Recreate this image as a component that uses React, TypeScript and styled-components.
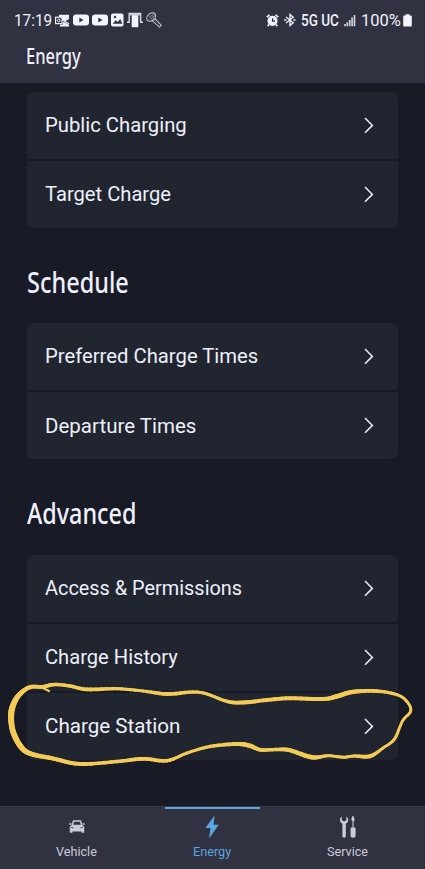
import React, { useLayoutEffect, useRef, useState } from "react";
import styled, { createGlobalStyle } from "styled-components";

const GlobalStyle = createGlobalStyle`
  * { box-sizing: border-box; }
  body { margin: 0; background: #181a25; }
`;

const Screen = styled.div`
  position: relative;
  display: flex;
  flex-direction: column;
  width: 425px;
  height: 869px;
  overflow: hidden;
  background: #181a25;
  color: #eef0fc;
  font-family: Roboto, "Noto Sans", sans-serif;
`;

const Header = styled.header`
  flex: none;
  height: 83px;
  background: #303241;
`;

const StatusBar = styled.div`
  display: flex;
  justify-content: space-between;
  align-items: center;
  height: 41px;
  padding: 0 13px 0 14px;
`;

const StatusGroup = styled.div<{ $gap: number }>`
  display: flex;
  align-items: center;
  gap: ${(p) => p.$gap}px;
`;

const Text = styled.span<{ $size: number; $weight?: number }>`
  display: block;
  white-space: nowrap;
  font-size: ${(p) => p.$size}px;
  font-weight: ${(p) => p.$weight ?? 400};
  line-height: 1.2;
`;

const FitBox = styled.span<{ $width: number }>`
  display: block;
  width: ${(p) => p.$width}px;
`;

const Stretch = styled.span`
  display: inline-block;
  transform-origin: left center;
`;

type FitProps = { children: string; width: number; size: number; weight?: number };

/** Condenses or expands a label so that it fills the given width. */
function FitText({ children, width, size, weight }: FitProps) {
  const ref = useRef<HTMLSpanElement>(null);
  const [scale, setScale] = useState(1);
  useLayoutEffect(() => {
    if (ref.current) setScale(width / ref.current.offsetWidth);
  }, [width, children]);
  return (
    <FitBox $width={width}>
      <Text $size={size} $weight={weight}>
        <Stretch ref={ref} style={{ transform: `scaleX(${scale})` }}>
          {children}
        </Stretch>
      </Text>
    </FitBox>
  );
}

const PageTitle = styled.h1`
  margin: 0;
  padding: 3px 0 0 26px;
  font-weight: 400;
  font-family: "Noto Sans", sans-serif;
`;

const Content = styled.main`
  flex: 1;
  min-height: 0;
  padding: 8.6px 27px 0;
  overflow: hidden;
`;

const SectionTitle = styled.h2`
  display: flex;
  align-items: center;
  height: 95.1px;
  margin: 0;
  padding-top: 13px;
  font-weight: 400;
  font-family: "Noto Sans", sans-serif;
`;

const Card = styled.section`
  display: flex;
  flex-direction: column;
  gap: 2px;
  overflow: hidden;
  border-radius: 7px;
`;

const Row = styled.div`
  display: flex;
  align-items: center;
  justify-content: space-between;
  height: 67.2px;
  padding: 1px 24.5px 0 17.6px;
  background: #21252f;
`;

const NavBar = styled.nav`
  flex: none;
  display: grid;
  grid-template-columns: 165px 95px 1fr;
  height: 63px;
  background: #303241;
  border-top: 1px solid #393b49;
`;

const NavItem = styled.div<{ $active?: boolean; $left?: number; $right?: number }>`
  display: flex;
  flex-direction: column;
  align-items: center;
  padding: 5px ${(p) => p.$right ?? 0}px 0 ${(p) => p.$left ?? 0}px;
  color: ${(p) => (p.$active ? "#5ca5df" : "#cbccd9")};
  box-shadow: inset 0 2px 0 ${(p) => (p.$active ? "#5ca5df" : "transparent")};
`;

const NavIcon = styled.span`
  display: flex;
  align-items: center;
  justify-content: center;
  height: 29px;
  margin-bottom: 4px;
`;

const Annotation = styled.svg`
  position: absolute;
  inset: 0;
  pointer-events: none;
`;

const Chevron = () => (
  <svg width="11" height="18" viewBox="0 0 11 18" fill="none">
    <path d="M2 1 9.4 8.4 2 15.8" stroke="#eceefa" strokeWidth="1.5" />
  </svg>
);

const Outlook = () => (
  <svg width="15" height="13" viewBox="0 0 15 13">
    <path d="M4 .7h10v3.1L10.2 6.5H7V3H4zM8 8.3h1.6L14 10.8V12.5H5v-2h3z" fill="#eef0fc" />
    <rect x=".6" y="3.2" width="6.4" height="6.4" fill="#303241" stroke="#eef0fc" strokeWidth="1.2" />
    <ellipse cx="3.8" cy="6.4" rx="1.2" ry="1.5" fill="none" stroke="#eef0fc" />
    <path d="m8.4 7.6 5.6-3.2M8.4 6.5l5.6 3.3" stroke="#eef0fc" strokeWidth="1.2" />
  </svg>
);

const Video = () => (
  <svg width="16" height="12" viewBox="0 0 16 12">
    <rect y=".5" width="16" height="11" rx="3" fill="#f2f4ff" />
    <path d="M6.3 3.6 10.5 6l-4.2 2.4z" fill="#303241" />
  </svg>
);

const Picture = () => (
  <svg width="13" height="14" viewBox="0 0 13 14">
    <rect y=".5" width="12.5" height="13" rx="2" fill="#f2f4ff" />
    <path d="m1.7 10.8 3-3.5 2.1 1.8 2.4-3 2.2 4.7z" fill="#303241" />
    <circle cx="4" cy="4" r="1.2" fill="#303241" />
  </svg>
);

const Printer = () => (
  <svg width="16" height="16" viewBox="0 0 16 16">
    <path d="M2.2 9.8V1.5h11.4v8.3M0 10.2h3M13 10.2h3" fill="none" stroke="#dadce9" strokeWidth="1.4" />
    <path d="M2.5 1.5h11v2h-11z" fill="#c9cbd9" />
    <path d="M4.7 3.2h6.6v12H4.7z" fill="#f2f4ff" />
  </svg>
);

const Racket = () => (
  <svg width="16" height="16" viewBox="0 0 16 16" fill="none" stroke="#c3c4d1" strokeWidth="1.1">
    <ellipse cx="5.2" cy="5" rx="3.5" ry="5" transform="rotate(48 5.2 5)" />
    <path d="M3 5.6 8 1.6M4.4 7.4 9.4 3" opacity=".6" />
    <path d="M6.3 8.8 8.8 6.6l6.4 6.6-1.7 1.9z" />
  </svg>
);

const Alarm = () => (
  <svg width="13" height="13" viewBox="0 0 13 13">
    <circle cx="6.5" cy="6.8" r="5.1" fill="#eef0fc" />
    <path d="M.8 3.2 3.5.9M9.5.9l2.7 2.3M3 10.5l-1.3 1.6M10 10.5l1.3 1.6" stroke="#eef0fc" strokeWidth="1.7" />
    <path d="M6.6 4.2v2.9H9" fill="none" stroke="#303241" strokeWidth="1.2" />
  </svg>
);

const Bluetooth = () => (
  <svg width="12" height="14" viewBox="0 0 12 14" fill="none" stroke="#eef0fc" strokeWidth="1.4">
    <path d="m2 4 7.2 5.8L6 12.5v-11l3.2 2.7L2 10" />
    <path d="M.2 7h2.2M9.4 7h2.2" strokeWidth="1.7" />
  </svg>
);

const Signal = () => (
  <svg width="12" height="13" viewBox="0 0 12 13" fill="#d6d8e5">
    <path d="M.2 10h1.6v2.3H.2zM2.5 8.2h1.6v4.1H2.5zM4.9 5.9h1.6v6.4H4.9zM7.3 3.5h1.6v8.8H7.3zM9.7 1h1.6v11.3H9.7z" />
  </svg>
);

const Battery = () => (
  <svg width="9" height="13" viewBox="0 0 9 13">
    <path d="M2.6.2h3.8v1.4h1.2c.8 0 1.2.4 1.2 1.2v8.5c0 .8-.4 1.3-1.2 1.3H1.4c-.8 0-1.2-.5-1.2-1.3V2.8c0-.8.4-1.2 1.2-1.2h1.2z" fill="#f2f4ff" />
  </svg>
);

const Car = () => (
  <svg width="16" height="13" viewBox="0 0 16 13">
    <path d="M3.2 5 4.6 1h6.8l1.4 4" fill="none" stroke="currentColor" strokeWidth="1.5" />
    <path d="M.3 3.3h2.4l-.6 1.4H.3zM15.7 3.3h-2.4l.6 1.4h1.8zM3 4.7h10l2.2 2v6.1h-2.6v-1.2H3.4v1.2H.8V6.7z" fill="currentColor" />
    <path d="M2 7.3 4.6 8M14 7.3 11.4 8" stroke="#303241" strokeWidth=".8" />
  </svg>
);

const Bolt = () => (
  <svg width="14" height="24" viewBox="0 0 14 24">
    <path d="M9.6.5.3 13h5.2L4 23.5 13.8 9.7H8.5z" fill="currentColor" />
  </svg>
);

const Tools = () => (
  <svg width="16" height="22" viewBox="0 0 16 22" fill="currentColor">
    <path d="M1.8.5C.6 1.3 0 2.6 0 4c0 1.7.9 3 2.4 3.7v12.7c0 1.5 3.4 1.5 3.4 0V7.7C7.3 7 8.2 5.7 8.2 4c0-1.4-.6-2.7-1.8-3.5v3.7L4.1 5.5 1.8 4.2z" />
    <path d="M12.1.3h1.4l1.2 3.5-1.1 1.6v6h.7c.8 0 1.3.5 1.3 1.3v7.5c0 1.9-5 1.9-5 0v-7.5c0-.8.5-1.3 1.2-1.3h.7v-6l-1.2-1.6z" />
  </svg>
);

type Point = [number, number, number];

/** Pen positions as x, y and stroke width. */
const loop: Point[] = [
  [11.2, 714, 6], [14, 703, 5.6], [20, 694, 4.8], [30, 687.2, 4], [43, 686.8, 3.6],
  [55, 684.5, 3.5], [70, 686, 3.4], [87, 689.4, 3.8], [117, 688.7, 3.2], [143, 691, 3.2],
  [167, 694, 3.8], [193, 692, 3.2], [207, 694, 3], [227, 701.4, 3.5], [243, 702.5, 4],
  [267, 700, 3.8], [290, 698.2, 4], [323, 699, 4], [337, 696.3, 4.6], [353, 691.8, 4.2],
  [377, 691.1, 3.5], [397, 694.7, 3], [406.5, 701, 2.8], [410.8, 710.8, 2.8],
  [402.5, 721, 2.8], [394.5, 739, 3], [383, 748, 2.8], [370, 756.2, 4], [354, 756, 3],
  [343, 757.2, 3], [328, 755.7, 3], [312, 757.3, 4.5], [290, 750.3, 4], [278, 749.4, 3.5],
  [261, 749.9, 3.7], [250, 745.8, 4.5], [237, 744, 4], [210, 746.5, 3.3], [187, 753, 3],
  [167, 760.7, 3.6], [143, 758.8, 3.8], [117, 761.5, 3.5], [80, 764, 4], [53, 758.5, 4.2],
  [30, 753.5, 5], [20, 745.5, 5.6], [12.6, 730, 5.6],
];

/** Smooths the closed pen line and samples short pieces along it. */
function samplePen(points: Point[], steps: number): Point[] {
  const n = points.length;
  return points.flatMap((p1, i) => {
    const p0 = points[(i - 1 + n) % n];
    const p2 = points[(i + 1) % n];
    const p3 = points[(i + 2) % n];
    return Array.from({ length: steps }, (_, s) => {
      const t = s / steps;
      return [0, 1, 2].map(
        (k) =>
          0.5 *
          (2 * p1[k] +
            (p2[k] - p0[k]) * t +
            (2 * p0[k] - 5 * p1[k] + 4 * p2[k] - p3[k]) * t * t +
            (3 * p1[k] - p0[k] - 3 * p2[k] + p3[k]) * t * t * t),
      ) as Point;
    });
  });
}

const pen = samplePen(loop, 6);

function HandDrawnLoop() {
  return (
    <Annotation width="425" height="869" viewBox="0 0 425 869" stroke="#f3cb57" strokeLinecap="round">
      {pen.map((p, i) => {
        const q = pen[(i + 1) % pen.length];
        return <line key={i} x1={p[0]} y1={p[1]} x2={q[0]} y2={q[1]} strokeWidth={p[2]} />;
      })}
      <path d="M41 687 49 691M43 686 51 684" strokeWidth="2.3" />
    </Annotation>
  );
}

type Item = [label: string, width: number];

const List = ({ items }: { items: Item[] }) => (
  <Card>
    {items.map(([label, width]) => (
      <Row key={label}>
        <FitText width={width} size={19.7}>{label}</FitText>
        <Chevron />
      </Row>
    ))}
  </Card>
);

export default function App() {
  return (
    <>
      <GlobalStyle />
      <Screen>
        <Header>
          <StatusBar>
            <StatusGroup $gap={3}>
              <FitText width={38} size={16.5}>17:19</FitText>
              <Outlook />
              <Video />
              <Video />
              <Picture />
              <Printer />
              <Racket />
            </StatusGroup>
            <StatusGroup $gap={5}>
              <Alarm />
              <Bluetooth />
              <FitText width={38} size={16} weight={500}>5G UC</FitText>
              <Signal />
              <StatusGroup $gap={2}>
                <FitText width={40} size={16.5}>100%</FitText>
                <Battery />
              </StatusGroup>
            </StatusGroup>
          </StatusBar>
          <PageTitle>
            <FitText width={55} size={21} weight={500}>Energy</FitText>
          </PageTitle>
        </Header>
        <Content>
          <List items={[["Public Charging", 142], ["Target Charge", 126]]} />
          <SectionTitle><FitText width={102} size={29} weight={500}>Schedule</FitText></SectionTitle>
          <List items={[["Preferred Charge Times", 213], ["Departure Times", 151]]} />
          <SectionTitle><FitText width={109.5} size={29} weight={500}>Advanced</FitText></SectionTitle>
          <List items={[["Access & Permissions", 197], ["Charge History", 133], ["Charge Station", 135]]} />
        </Content>
        <NavBar>
          <NavItem $right={12}>
            <NavIcon><Car /></NavIcon>
            <FitText width={41} size={12}>Vehicle</FitText>
          </NavItem>
          <NavItem $active $right={1}>
            <NavIcon><Bolt /></NavIcon>
            <FitText width={38} size={12}>Energy</FitText>
          </NavItem>
          <NavItem $left={10}>
            <NavIcon><Tools /></NavIcon>
            <FitText width={41} size={12}>Service</FitText>
          </NavItem>
        </NavBar>
        <HandDrawnLoop />
      </Screen>
    </>
  );
}
